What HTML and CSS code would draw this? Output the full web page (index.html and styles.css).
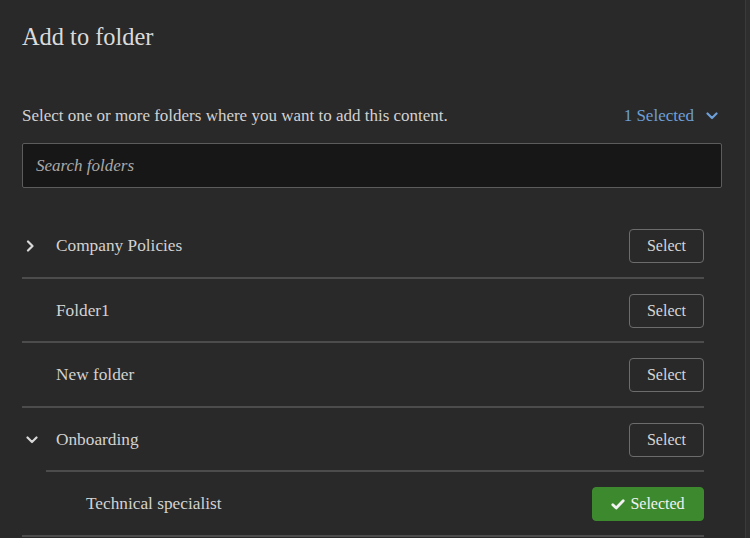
FILE: index.html
```html
<!DOCTYPE html>
<html lang="en">
<head>
<meta charset="utf-8">
<title>Add to folder</title>
<link rel="stylesheet" href="styles.css">
</head>
<body>
<div class="panel">
  <h1 class="title">Add to folder</h1>

  <div class="intro">
    <p class="intro-text">Select one or more folders where you want to add this content.</p>
    <button class="count" type="button">1 Selected
      <svg class="count-chevron" viewBox="0 0 12 8" width="12" height="8" aria-hidden="true"><path d="M1.5 1.5 L6 6 L10.5 1.5" fill="none" stroke="currentColor" stroke-width="2.2" stroke-linecap="round" stroke-linejoin="round"/></svg>
    </button>
  </div>

  <div class="search">
    <input class="search-input" type="text" placeholder="Search folders">
  </div>

  <ul class="folders">
    <li class="folder">
      <div class="row">
        <span class="toggle">
          <svg viewBox="0 0 8 12" width="8" height="12" aria-hidden="true"><path d="M2 1.5 L6.5 6 L2 10.5" fill="none" stroke="currentColor" stroke-width="2.2" stroke-linecap="round" stroke-linejoin="round"/></svg>
        </span>
        <span class="name">Company Policies</span>
        <button class="pick" type="button">Select</button>
      </div>
    </li>
    <li class="folder">
      <div class="row">
        <span class="toggle"></span>
        <span class="name">Folder1</span>
        <button class="pick" type="button">Select</button>
      </div>
    </li>
    <li class="folder">
      <div class="row">
        <span class="toggle"></span>
        <span class="name">New folder</span>
        <button class="pick" type="button">Select</button>
      </div>
    </li>
    <li class="folder open">
      <div class="row">
        <span class="toggle">
          <svg viewBox="0 0 12 8" width="12" height="8" aria-hidden="true"><path d="M1.5 1.5 L6 6 L10.5 1.5" fill="none" stroke="currentColor" stroke-width="2.2" stroke-linecap="round" stroke-linejoin="round"/></svg>
        </span>
        <span class="name">Onboarding</span>
        <button class="pick" type="button">Select</button>
      </div>
      <ul class="children">
        <li class="child">
          <div class="row child-row">
            <span class="name">Technical specialist</span>
            <button class="pick picked" type="button">
              <svg viewBox="0 0 14 11" width="14" height="11" aria-hidden="true"><path d="M1.8 5.8 L5.2 9 L12.2 1.8" fill="none" stroke="currentColor" stroke-width="2.8" stroke-linecap="round" stroke-linejoin="round"/></svg>
              Selected
            </button>
          </div>
        </li>
      </ul>
    </li>
  </ul>
</div>
</body>
</html>
```

FILE: styles.css
```css
html, body {
  margin: 0;
  padding: 0;
  height: 100%;
  overflow: hidden;
}

body {
  background: #2e2e2e;
  color: #d4d4d4;
  font-family: "Liberation Serif", "Times New Roman", serif;
}

.panel {
  box-sizing: border-box;
  width: 746px;
  height: 100%;
  background: #292929;
  border-right: 1px solid #3a3a3a;
  padding: 22px 0 0 22px;
}

.title {
  margin: 0;
  font-size: 24.4px;
  line-height: 30px;
  font-weight: normal;
  color: #dadada;
}

.intro {
  margin-top: 54px;
  width: 700px;
  display: flex;
  align-items: center;
  justify-content: space-between;
}

.intro-text {
  margin: 0;
  font-size: 17px;
  line-height: 20px;
  color: #d2d2d2;
}

.count {
  display: flex;
  align-items: center;
  gap: 12px;
  margin: 0 4px 0 0;
  padding: 0;
  border: 0;
  background: none;
  font-family: inherit;
  font-size: 17px;
  line-height: 20px;
  color: #6c9fd8;
  cursor: pointer;
}

.count-chevron {
  display: block;
}

.search {
  margin-top: 17px;
  width: 700px;
}

.search-input {
  box-sizing: border-box;
  width: 100%;
  height: 45px;
  margin: 0;
  padding: 0 13px;
  background: #171717;
  border: 1px solid #5c5c5c;
  border-radius: 2px;
  font-family: inherit;
  font-size: 17px;
  color: #d4d4d4;
  outline: none;
}

.search-input::placeholder {
  font-style: italic;
  color: #a9a9a9;
}

.folders,
.children {
  list-style: none;
  margin: 0;
  padding: 0;
}

.folders {
  margin-top: 26px;
  width: 682px;
}

.folder {
  border-bottom: 2px solid #4c4c4c;
}

.row {
  box-sizing: border-box;
  height: 62.5px;
  padding-top: 2px;
  display: flex;
  align-items: center;
}

.toggle {
  width: 34px;
  flex: none;
  display: flex;
  align-items: center;
  padding-left: 4px;
  box-sizing: border-box;
  color: #d8d8d8;
}

.toggle svg {
  display: block;
}

.name {
  flex: 1;
  font-size: 17.3px;
  line-height: 20px;
  color: #d2d2d2;
}

.children {
  margin-left: 24px;
}

.child {
  border-top: 2px solid #4c4c4c;
}

.child-row {
  padding-left: 40px;
}

.pick {
  box-sizing: border-box;
  height: 34px;
  min-width: 75px;
  padding: 0 16px;
  display: flex;
  align-items: center;
  justify-content: center;
  gap: 5px;
  background: transparent;
  border: 1px solid #6c6c6c;
  border-radius: 4px;
  font-family: inherit;
  font-size: 16px;
  color: #d6d6d6;
  cursor: pointer;
}

.picked {
  width: 112px;
  background: #3d8a2e;
  border-color: #3d8a2e;
  color: #f2f2f2;
}

.picked svg {
  display: block;
}
```
